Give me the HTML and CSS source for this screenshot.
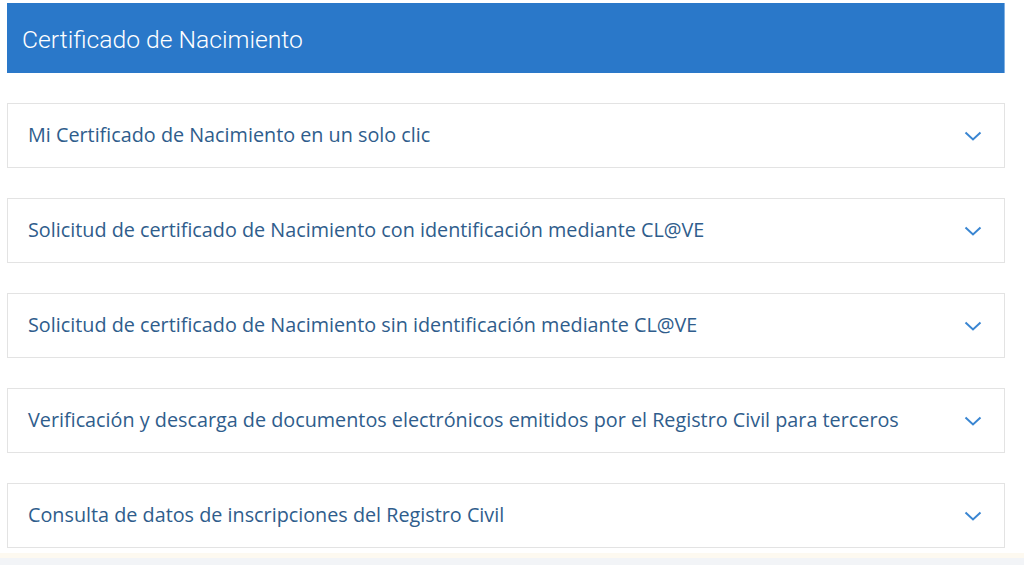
FILE: index.html
```html
<!DOCTYPE html>
<html lang="es">
<head>
<meta charset="utf-8">
<title>Certificado de Nacimiento</title>
<link rel="stylesheet" href="styles.css">
</head>
<body>
<main class="page">
  <h1 class="banner">Certificado de Nacimiento</h1>
  <div class="accordion">
    <div class="item"><span class="label">Mi Certificado de Nacimiento en un solo clic</span><svg class="chev" width="18" height="10" viewBox="0 0 18 10"><path d="M1.5 1.5 L9 8.5 L16.5 1.5" fill="none" stroke="#3a86d2" stroke-width="2"/></svg></div>
    <div class="item"><span class="label">Solicitud de certificado de Nacimiento con identificación mediante CL@VE</span><svg class="chev" width="18" height="10" viewBox="0 0 18 10"><path d="M1.5 1.5 L9 8.5 L16.5 1.5" fill="none" stroke="#3a86d2" stroke-width="2"/></svg></div>
    <div class="item"><span class="label">Solicitud de certificado de Nacimiento sin identificación mediante CL@VE</span><svg class="chev" width="18" height="10" viewBox="0 0 18 10"><path d="M1.5 1.5 L9 8.5 L16.5 1.5" fill="none" stroke="#3a86d2" stroke-width="2"/></svg></div>
    <div class="item"><span class="label">Verificación y descarga de documentos electrónicos emitidos por el Registro Civil para terceros</span><svg class="chev" width="18" height="10" viewBox="0 0 18 10"><path d="M1.5 1.5 L9 8.5 L16.5 1.5" fill="none" stroke="#3a86d2" stroke-width="2"/></svg></div>
    <div class="item"><span class="label">Consulta de datos de inscripciones del Registro Civil</span><svg class="chev" width="18" height="10" viewBox="0 0 18 10"><path d="M1.5 1.5 L9 8.5 L16.5 1.5" fill="none" stroke="#3a86d2" stroke-width="2"/></svg></div>
  </div>
</main>
<footer class="footer"></footer>
</body>
</html>
```
FILE: styles.css
```css
html, body {
  margin: 0;
  padding: 0;
  background: #ffffff;
  overflow: hidden;
}
.page {
  padding: 3px 19px 0 7px;
  width: 998px;
}
.banner {
  margin: 0;
  height: 70px;
  background: #2a78c9;
  border-right: 1px solid #7fb0e3;
  box-sizing: border-box;
  display: flex;
  align-items: center;
  padding: 2px 0 0 15px;
  font-family: Roboto, "Liberation Sans", sans-serif;
  font-weight: 300;
  font-size: 24.7px;
  color: #ffffff;
}
.accordion {
  display: flex;
  flex-direction: column;
  gap: 30px;
  margin-top: 30px;
}
.item {
  height: 65px;
  box-sizing: border-box;
  border: 1px solid #e3e3e3;
  display: flex;
  align-items: center;
  justify-content: space-between;
  padding: 0 22px 0 20px;
}
.label {
  font-family: "Open Sans", "Liberation Sans", sans-serif;
  font-size: 19.8px;
  color: #2f5d8c;
  margin-top: -2px;
}
.chev {
  display: block;
  margin-top: 1px;
}
.footer {
  margin-top: 5px;
  height: 30px;
  background: #f2f4f7;
  border-top: 5px solid #fdf9f0;
}
```
